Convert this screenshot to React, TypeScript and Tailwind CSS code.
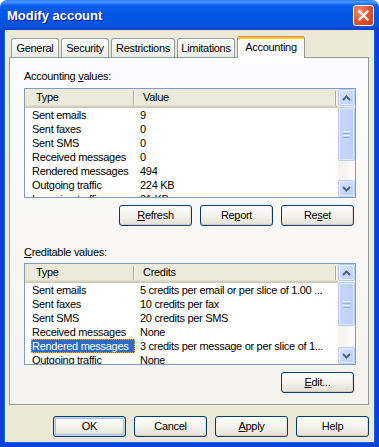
import React from "react";

type Row = [string, string];

const accounting: Row[] = [
  ["Sent emails", "9"],
  ["Sent faxes", "0"],
  ["Sent SMS", "0"],
  ["Received messages", "0"],
  ["Rendered messages", "494"],
  ["Outgoing traffic", "224 KB"],
  ["Incoming traffic", "31 KB"],
];

const credits: Row[] = [
  ["Sent emails", "5 credits per email or per slice of 1.00 ..."],
  ["Sent faxes", "10 credits per fax"],
  ["Sent SMS", "20 credits per SMS"],
  ["Received messages", "None"],
  ["Rendered messages", "3 credits per message or per slice of 1..."],
  ["Outgoing traffic", "None"],
];

function Btn({ children, isDefault }: { children: React.ReactNode; isDefault?: boolean }) {
  return (
    <button
      className={
        isDefault
          ? "flex h-[21px] w-[73px] items-center justify-center rounded-[3px] border border-[#003C74] bg-linear-to-b from-white via-[#F4F3EE] to-[#E2DFD3] text-[11px] shadow-[inset_0_0_0_1px_#C2D5FA,inset_0_0_0_2px_#A5BFF2]"
          : "flex h-[21px] w-[73px] items-center justify-center rounded-[3px] border border-[#003C74] bg-linear-to-b from-white via-[#F4F3EE] to-[#E2DFD3] text-[11px] shadow-[inset_0_-1px_0_#D2CCBF,inset_-1px_0_0_#E0DCD0]"
      }
    >
      {children}
    </button>
  );
}

function Arrow({ up }: { up?: boolean }) {
  return (
    <svg width="9" height="6" viewBox="0 0 9 6">
      <path
        d={up ? "M1 5 L4.5 1.5 L8 5" : "M1 1 L4.5 4.5 L8 1"}
        fill="none"
        stroke="#4D6185"
        strokeWidth="2"
      />
    </svg>
  );
}

function SbButton({ up }: { up?: boolean }) {
  return (
    <div className="flex h-[17px] w-[17px] items-center justify-center rounded-[2px] border border-[#B7CAF5] bg-linear-to-br from-[#DCE6FE] to-[#B8CBF8] shadow-[inset_0_0_0_1px_#E8EFFE]">
      <Arrow up={up} />
    </div>
  );
}

function Scrollbar({ thumb }: { thumb: number }) {
  return (
    <div className="flex w-[17px] flex-col bg-linear-to-r from-[#F3F1EC] to-[#FEFEFB]">
      <SbButton up />
      <div
        className="mt-[1px] flex flex-col items-center justify-center gap-[1px] rounded-[2px] border border-[#B7CAF5] bg-linear-to-r from-[#C9D8FC] to-[#BCCEF9] shadow-[inset_0_0_0_1px_#E4ECFE]"
        style={{ height: thumb }}
      >
        <div className="h-[1px] w-[7px] bg-[#EEF4FE]" />
        <div className="h-[1px] w-[7px] bg-[#8CB0F8]" />
        <div className="h-[1px] w-[7px] bg-[#EEF4FE]" />
        <div className="h-[1px] w-[7px] bg-[#8CB0F8]" />
      </div>
      <div className="flex-1" />
      <SbButton />
    </div>
  );
}

function ListView({
  col2,
  rows,
  height,
  thumb,
  selected,
}: {
  col2: string;
  rows: Row[];
  height: number;
  thumb: number;
  selected?: number;
}) {
  return (
    <div className="flex w-[332px] border border-[#7F9DB9] bg-white" style={{ height }}>
      <div className="flex min-w-0 flex-1 flex-col overflow-hidden">
        <div className="flex h-[19px] shrink-0 items-center bg-[#EBEADB] shadow-[inset_0_-1px_#CBC7B8,inset_0_-2px_#D6D2C2,inset_0_-3px_#E2DECD]">
          <div className="flex h-full w-[108px] items-center pb-[2px] pl-[11px]">Type</div>
          <div className="mb-[2px] h-[14px] w-[1px] bg-[#ACA899]" />
          <div className="mb-[2px] h-[14px] w-[1px] bg-white" />
          <div className="flex h-full flex-1 items-center pb-[2px] pl-[8px]">{col2}</div>
          <div className="mb-[2px] h-[14px] w-[1px] bg-[#ACA899]" />
          <div className="mb-[2px] mr-[1px] h-[14px] w-[1px] bg-white" />
        </div>
        {rows.map((r, i) => (
          <div key={i} className="flex h-[14px] shrink-0 items-center leading-[14px] whitespace-nowrap">
            <div className="w-[108px] shrink-0 pl-[6px]">
              {i === selected ? (
                <span className="block h-[14px] w-[104px] border border-dotted border-[#E8A84A] bg-[#316AC5] leading-[12px] text-white">
                  {r[0]}
                </span>
              ) : (
                <span className="block pl-[1px]">{r[0]}</span>
              )}
            </div>
            <div className="overflow-hidden pl-[7px]">{r[1]}</div>
          </div>
        ))}
      </div>
      <Scrollbar thumb={thumb} />
    </div>
  );
}

const tabs = [
  { label: "General", w: "w-[48px]" },
  { label: "Security", w: "w-[48px]" },
  { label: "Restrictions", w: "w-[64px]" },
  { label: "Limitations", w: "w-[58px]" },
];

export default function App() {
  return (
    <div className="flex h-[447px] w-[379px] flex-col bg-white font-['Liberation_Sans',Arial,sans-serif] text-[11px] leading-[13px] tracking-[-0.3px] text-black">
      {/* title bar */}
      <div className="flex h-[30px] shrink-0 items-center justify-between rounded-t-[7px] bg-[linear-gradient(to_bottom,#2A7BF6_0%,#4A9AFF_6%,#0A5FEF_18%,#0055E5_55%,#0453DD_88%,#0340C8_100%)] pl-[7px] pr-[5px]">
        <span className="text-[13px] font-bold tracking-normal text-white [text-shadow:1px_1px_#0A1C8C]">
          Modify account
        </span>
        <div className="flex h-[21px] w-[21px] items-center justify-center rounded-[3px] border border-white bg-[radial-gradient(circle_at_30%_30%,#F19A7C_0%,#E2572F_45%,#C83D18_100%)]">
          <svg width="11" height="11" viewBox="0 0 11 11">
            <path d="M1.5 1.5 L9.5 9.5 M9.5 1.5 L1.5 9.5" stroke="white" strokeWidth="2.2" strokeLinecap="square" />
          </svg>
        </div>
      </div>

      {/* body */}
      <div className="flex flex-1 flex-col border-x-[4px] border-b-[4px] border-[#0841D6] bg-[#ECE9D8] shadow-[inset_1px_0_#1662EE,inset_-1px_0_#1662EE,inset_0_-1px_#1662EE]">
        {/* tabs */}
        <div className="mt-[6px] flex h-[21px] items-end gap-[2px] pl-[7px]">
          {tabs.map((t) => (
            <div
              key={t.label}
              className={`flex h-[19px] ${t.w} items-center justify-center rounded-t-[3px] border border-b-0 border-[#919B9C] bg-linear-to-b from-white to-[#ECEBE6]`}
            >
              {t.label}
            </div>
          ))}
          <div className="relative z-10 -mb-px flex h-[22px] w-[68px] flex-col rounded-t-[3px] border-x border-[#919B9C] bg-[#FCFCFE]">
            <div className="h-[1px] rounded-t-[3px] bg-[#E68B2C]" />
            <div className="h-[2px] bg-[#FFC83C]" />
            <div className="flex flex-1 items-center justify-center pb-[3px]">Accounting</div>
          </div>
        </div>

        {/* panel */}
        <div className="ml-[5px] flex h-[348px] w-[360px] flex-col border border-[#919B9C] bg-linear-to-b from-[#FCFCFE] to-[#F4F3EE] pl-[14px] pt-[12px]">
          <div>
            Accounting <u>v</u>alues:
          </div>
          <div className="mt-[5px]">
            <ListView col2="Value" rows={accounting} height={110} thumb={54} />
          </div>
          <div className="mt-[7px] flex w-[332px] justify-end gap-[8px] pr-[2px]">
            <Btn>
              <u>R</u>efresh
            </Btn>
            <Btn>
              Re<u>p</u>ort
            </Btn>
            <Btn>
              Re<u>s</u>et
            </Btn>
          </div>
          <div className="mt-[20px]">
            <u>C</u>reditable values:
          </div>
          <div className="mt-[4px]">
            <ListView col2="Credits" rows={credits} height={102} thumb={44} selected={4} />
          </div>
          <div className="mt-[7px] flex w-[332px] justify-end pr-[2px]">
            <Btn>
              <u>E</u>dit...
            </Btn>
          </div>
        </div>

        {/* dialog buttons */}
        <div className="mt-[11px] flex justify-end gap-[8px] pr-[6px]">
          <Btn isDefault>OK</Btn>
          <Btn>Cancel</Btn>
          <Btn>
            <u>A</u>pply
          </Btn>
          <Btn>Help</Btn>
        </div>
      </div>
    </div>
  );
}
